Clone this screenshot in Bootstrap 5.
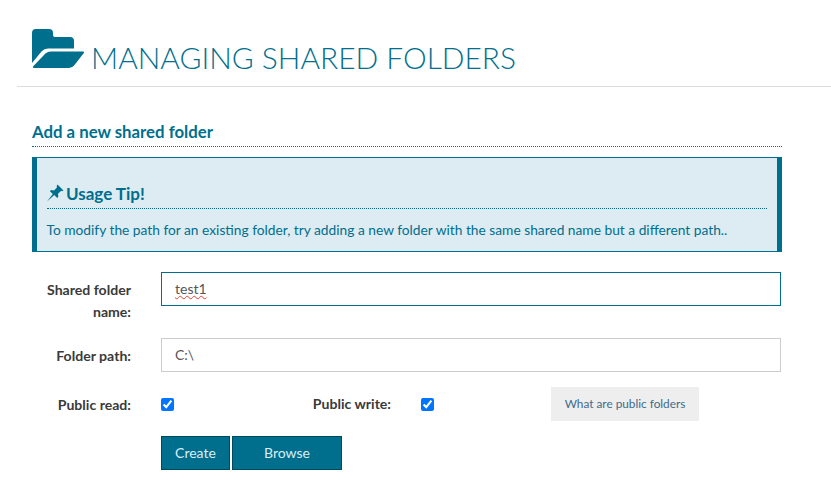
<!DOCTYPE html>
<html lang="en">
<head>
<meta charset="utf-8">
<title>Managing shared folders</title>
<link href="https://cdn.jsdelivr.net/npm/bootstrap@5.3.0/dist/css/bootstrap.min.css" rel="stylesheet">
<style>
body { font-family: Lato, "Open Sans", sans-serif; font-size: 14px; color: #333; background: #fff; overflow: hidden; }
.page-head { margin-left: 17px; height: 87px; padding: 28px 0 0 15px; border-bottom: 1px solid #ddd; }
.page-title { font-family: Lato, sans-serif; font-weight: 300; font-size: 29.9px; line-height: 40px; color: #006f8e; margin: 0; gap: 7px; }
.folder-ico { width: 52px; height: 40px; flex: none; margin-top: 1px; }
.title-txt { margin-top: 9px; }
.page-body { width: 750px; margin: 0 0 0 32px; }
.sec-title { font-size: 16.8px; font-weight: 700; line-height: 20px; color: #006f8e; margin: 35px 0 0; padding-bottom: 4px; border-bottom: 1px dotted #006f8e; height: 25px; }
.tip-box { margin-top: 10px; height: 95px; background: #ddebf2; color: #006f8e; border: solid #006f8e; border-width: 1px 5px; border-radius: 0; padding: 25px 10px 0; }
.tip-title { font-size: 17px; font-weight: 700; line-height: 20px; margin: 0; padding: 1px 0 5px; border-bottom: 1px dotted #006f8e; height: 26px; gap: 3px; }
.tip-pin { margin-right: -1px; margin-top: -2px; }
.tip-text { font-size: 13.75px; line-height: 18px; margin: 12px 0 0 -.5px; }
.form-line { display: flex; margin-top: 20px; }
.form-line + .form-line { margin-top: 15px; }
.lbl { width: 99px; flex: none; text-align: right; font-weight: 700; font-size: 14.1px; line-height: 22px; color: #3a3a3a; margin: 0 30px 0 0; padding-top: 7px; }
.txt { flex: none; width: 620px; height: 34px; border: 1px solid #ccc; border-radius: 0; font-size: 14px; color: #555; padding: 6px 13px; line-height: 20px; background: #fff; }
.txt.is-on { border-color: #006f8e; }
.path-in { padding-top: 5px; padding-bottom: 7px; }
.squig { text-decoration: underline wavy #e0453a 1px; text-underline-offset: 1px; }
.check-line { align-items: center; height: 34px; }
.check-line .lbl { padding-top: 1px; }
.nat { width: 13px; height: 13px; margin: 0; flex: none; }
.lbl-w { width: 217px; flex: none; text-align: right; font-weight: 700; font-size: 14.1px; color: #3a3a3a; margin: 0 30px 0 0; }
.btn-what { width: 148px; height: 34px; margin-left: 117px; background: #eee; color: #3f6a8a; font-size: 11.8px; border: 0; border-radius: 0; padding: 0; }
.btn-row { margin-left: 129px; margin-top: 15px; gap: 2px; }
.btn-teal { height: 34px; background: #006f8e; border: 1px solid #004a5f; border-radius: 0; color: #d9eef5; font-size: 14px; padding: 0 0 2px; }
.btn-teal:hover { background: #006f8e; color: #d9eef5; border-color: #004a5f; }
.w-create { width: 69px; }
.w-browse { width: 110px; }
</style>
</head>
<body>
<header class="page-head">
  <h1 class="page-title d-flex align-items-start">
    <svg class="folder-ico" viewBox="0 0 52 40" aria-hidden="true"><path fill="#006f8e" d="M0 4a4 4 0 0 1 4-4h13a4 4 0 0 1 4 4v2a2 2 0 0 0 2 2h15a4 4 0 0 1 4 4v7.500H16a9 9 0 0 0-6.500 3L0 34z"/><path fill="#006f8e" d="M19 22.500h32a1 1 0 0 1 1 1.200L42.500 36a7 7 0 0 1-5.500 3H2a1 1 0 0 1-1-1.500L12 26a9 9 0 0 1 7-3.500z"/></svg>
    <span class="title-txt">MANAGING SHARED FOLDERS</span>
  </h1>
</header>
<main class="page-body">
  <h2 class="sec-title">Add a new shared folder</h2>
  <div class="alert tip-box mb-0">
    <h3 class="tip-title d-flex align-items-center">
      <svg class="tip-pin" width="17" height="18" viewBox="0 0 17 18" aria-hidden="true"><path fill="#006f8e" d="M10.500.500l6 6-1.300.800-1-.500-3.200 3 .300 3-1.100 1.200-2.900-2.900L0 17.500l5.800-7.400-2.900-2.900 1.200-1.100 3 .300 3-3.200-.5-1z"/></svg>
      <span>Usage Tip!</span>
    </h3>
    <p class="tip-text">To modify the path for an existing folder, try adding a new folder with the same shared name but a different path..</p>
  </div>
  <form>
    <div class="form-line">
      <label class="lbl">Shared folder name:</label>
      <div class="form-control txt is-on"><span class="squig">test1</span></div>
    </div>
    <div class="form-line">
      <label class="lbl">Folder path:</label>
      <input class="form-control txt path-in" type="text" value="C:\">
    </div>
    <div class="form-line check-line">
      <label class="lbl">Public read:</label>
      <input class="nat" type="checkbox" checked>
      <label class="lbl-w">Public write:</label>
      <input class="nat" type="checkbox" checked>
      <button type="button" class="btn btn-what">What are public folders</button>
    </div>
    <div class="d-flex btn-row">
      <button type="button" class="btn btn-teal w-create">Create</button>
      <button type="button" class="btn btn-teal w-browse">Browse</button>
    </div>
  </form>
</main>
<script src="https://cdn.jsdelivr.net/npm/bootstrap@5.3.0/dist/js/bootstrap.bundle.min.js"></script>
</body>
</html>
